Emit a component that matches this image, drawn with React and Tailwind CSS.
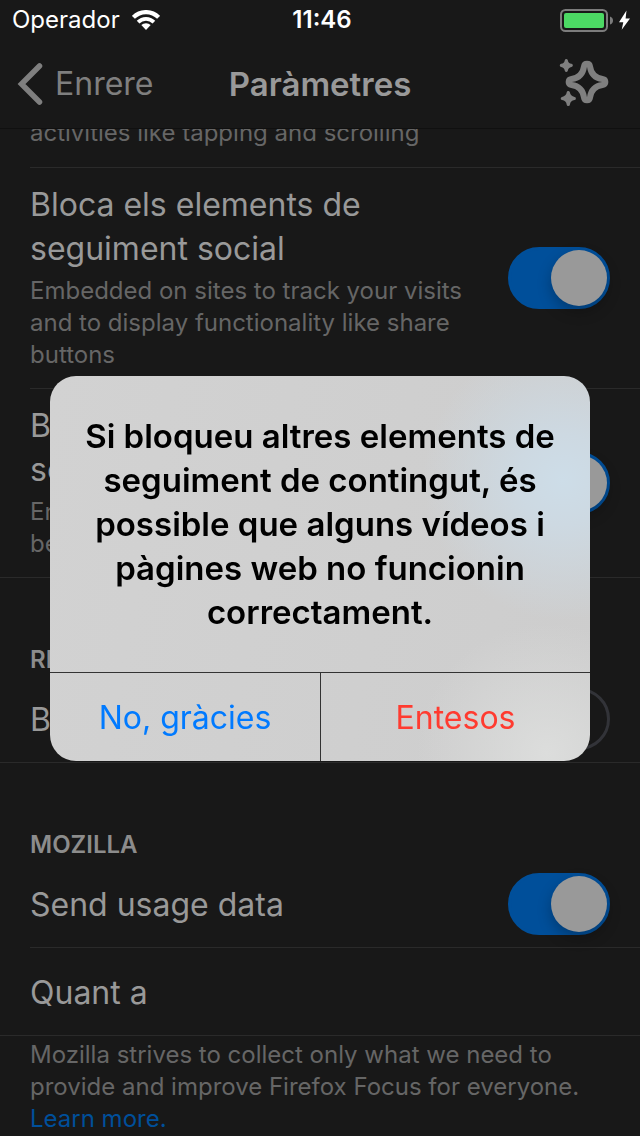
import React from "react";

function Toggle({ id, on }) {
  return (
    <input
      id={id}
      type="checkbox"
      role="switch"
      defaultChecked={on}
      className="block h-[62px] w-[102px] shrink-0 appearance-none rounded-full border-[3px] border-[#323338] before:block before:size-14 before:rounded-full before:bg-[#181818] before:content-[''] checked:border-[#004f9a] checked:bg-[#004f9a] checked:before:ml-10 checked:before:bg-[#999999] checked:before:shadow-[0_6px_14px_rgba(0,0,0,0.25)]"
    />
  );
}

function Row({ id, title, note, on, inset }) {
  return (
    <div className="pl-[30px]">
      <div
        className={
          note
            ? "flex items-center justify-between gap-4 pr-[30px]"
            : "flex h-[87px] items-center justify-between gap-4 pr-[30px]"
        }
      >
        <label htmlFor={id} className={note ? "block max-w-[460px] pt-[15px] pb-[17px]" : "block pt-[2px]"}>
          <span className="block text-[32px] leading-[44px] text-[#999999]">{title}</span>
          {note && <span className="mt-1 block text-[24px] leading-8 text-[#666666]">{note}</span>}
        </label>
        <Toggle id={id} on={on} />
      </div>
      <div className={inset ? "h-px bg-[#2a2a2a]" : "-ml-[30px] h-px bg-[#2a2a2a]"} />
    </div>
  );
}

function SectionTitle({ children }) {
  return (
    <h2 className="flex h-[97px] items-end px-[30px] text-[24px] leading-[30px] font-semibold text-[#8c8c8c]">
      {children}
    </h2>
  );
}

function StatusBar() {
  return (
    <div className="grid h-10 grid-cols-3 items-center pr-2 pl-3 text-[24px] leading-10 text-white">
      <div className="flex items-center gap-3">
        <span>Operador</span>
        <svg width="28" height="20" viewBox="0 0 28 20" fill="none" stroke="#fff" aria-hidden="true">
          <path d="M1.4 7.4a17.6 17.6 0 0 1 25.2 0" strokeWidth="4.2" />
          <path d="M6.1 12.1a11.2 11.2 0 0 1 15.8 0" strokeWidth="3.8" />
          <path d="M14 20l-4.7-4.9a6.8 6.8 0 0 1 9.4 0z" fill="#fff" stroke="none" />
        </svg>
      </div>
      <span className="text-center font-semibold">11:46</span>
      <svg className="justify-self-end" width="72" height="24" viewBox="0 0 72 24" aria-hidden="true">
        <rect x="1" y="2" width="46" height="21" rx="4.5" fill="none" stroke="#7c7c7c" strokeWidth="2" />
        <rect x="4" y="5" width="40" height="15" rx="2" fill="#4cd964" />
        <path d="M50 8.5q3 1 3 4t-3 4z" fill="#7c7c7c" />
        <path d="M66.5 2.5L59 14.2h4.3l-1.6 7.6L70 10.5h-4.4z" fill="#fff" />
      </svg>
    </div>
  );
}

function NavBar() {
  return (
    <nav className="grid h-[88px] grid-cols-[1fr_auto_1fr] items-center px-[17px]">
      <button type="button" className="flex items-center gap-3 text-[32px] leading-[44px] text-[#7f7f7f]">
        <svg width="26" height="44" viewBox="0 0 26 44" fill="none" stroke="currentColor" strokeWidth="5.5" strokeLinecap="round" strokeLinejoin="miter" aria-hidden="true">
          <path d="M22.5 4L4.5 22l18 18" />
        </svg>
        Enrere
      </button>
      <h1 className="text-[33px] leading-[44px] font-semibold text-[#999999]">Paràmetres</h1>
      <button type="button" aria-label="Novetats" className="mr-[14px] justify-self-end text-[#7f7f7f]">
        <svg width="50" height="50" viewBox="1 2 50 50" aria-hidden="true">
          <path
            transform="translate(29 25)"
            fill="none"
            stroke="currentColor"
            strokeWidth="6"
            strokeLinejoin="round"
            d="M-3 -15.5C-4 -8 -8 -4 -15.5 -3C-19.3 -2.5 -19.3 2.5 -15.5 3C-8 4 -4 8 -3 15.5C-2.5 19.3 2.5 19.3 3 15.5C4 8 8 4 15.5 3C19.3 2.5 19.3 -2.5 15.5 -3C8 -4 4 -8 3 -15.5C2.5 -19.3 -2.5 -19.3 -3 -15.5Z"
          />
          <g fill="currentColor" stroke="currentColor" strokeWidth="3.2" strokeLinejoin="round">
            <path d="M8.3 3.6Q8.8 7.6 13.2 8.4Q8.8 9.2 8.3 13.4Q7.8 9.2 3.4 8.4Q7.8 7.6 8.3 3.6Z" />
            <path d="M10.3 35.5Q11 40.5 16.3 41.5Q11 42.3 10.3 47.5Q9.6 42.3 4.3 41.5Q9.6 40.5 10.3 35.5Z" />
          </g>
        </svg>
      </button>
    </nav>
  );
}

function Alert() {
  return (
    <div className="fixed inset-0 flex items-center justify-center">
      <div
        role="alertdialog"
        aria-modal="true"
        aria-labelledby="alert-title"
        className="w-[540px] overflow-hidden rounded-[26px] bg-[#d0d0d0] bg-[radial-gradient(circle_at_95%_27%,#cddde8_0px,#cdd9e2_45px,transparent_140px),radial-gradient(circle_at_92%_98%,#dcdddc_0px,transparent_130px),linear-gradient(100deg,#d2d2d2,#cdcdcd)]"
      >
        <h2 id="alert-title" className="px-8 py-[38px] text-center text-[33px] leading-[44px] font-semibold text-black">
          Si bloqueu altres elements de seguiment de contingut, és possible que alguns vídeos i pàgines web no funcionin correctament.
        </h2>
        <div className="grid h-[89px] grid-cols-2 border-t border-[#333333] text-[32px] leading-[44px]">
          <button type="button" className="pt-[2px] text-[#007aff]">No, gràcies</button>
          <button type="button" className="border-l border-[#333333] pt-[2px] text-[#ff3b30]">Entesos</button>
        </div>
      </div>
    </div>
  );
}

export default function App() {
  return (
    <div className="min-h-screen bg-[#181818] font-['Inter',sans-serif]">
      <header className="border-b border-[#101010]">
        <StatusBar />
        <NavBar />
      </header>
      <main>
        <div className="flex h-[38px] items-end overflow-hidden pb-[18px] pl-[30px]">
          <p className="text-[24px] leading-8 text-[#666666]">activities like tapping and scrolling</p>
        </div>
        <div className="ml-[30px] h-px bg-[#2a2a2a]" />
        <Row
          id="social"
          title="Bloca els elements de seguiment social"
          note="Embedded on sites to track your visits and to display functionality like share buttons"
          on
          inset
        />
        <Row
          id="content"
          title="Bloca altres elements de seguiment de contingut"
          note="Enabling this may cause some pages to behave unexpectedly"
          on
        />
        <SectionTitle>RENDIMENT</SectionTitle>
        <Row id="fonts" title="Bloca els tipus de lletra" />
        <SectionTitle>MOZILLA</SectionTitle>
        <Row id="usage" title="Send usage data" on inset />
        <a href="#about" className="flex h-[87px] items-center pt-[2px] pl-[30px] text-[32px] leading-[44px] text-[#999999]">
          Quant a
        </a>
        <div className="h-px bg-[#2a2a2a]" />
        <p className="px-[30px] pt-[3px] text-[24px] leading-8 text-[#666666]">
          Mozilla strives to collect only what we need to provide and improve Firefox Focus for everyone.{" "}
          <a href="#learn" className="block text-[#004f9a]">Learn more.</a>
        </p>
      </main>
      <Alert />
    </div>
  );
}
